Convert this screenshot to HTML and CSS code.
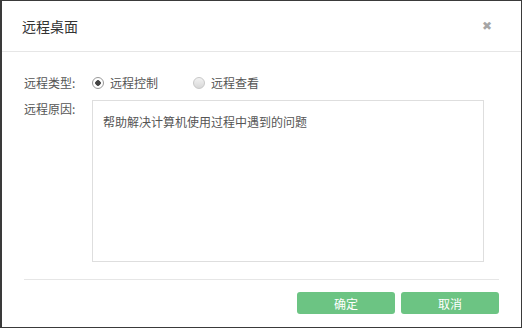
FILE: index.html
```html
<!DOCTYPE html>
<html lang="zh-CN">
<head>
    <meta charset="UTF-8">
    <title>远程桌面</title>
    <link rel="stylesheet" href="styles.css">
</head>
<body>
    <div class="dialog">
        <div class="dialog-header">
            <span class="dialog-title">远程桌面</span>
            <span class="close">&#x2716;</span>
        </div>

        <div class="dialog-body">
            <div class="form-row">
                <label class="form-label">远程类型:</label>
                <div class="radio-group">
                    <span class="radio checked"></span><span class="radio-text">远程控制</span>
                    <span class="radio"></span><span class="radio-text">远程查看</span>
                </div>
            </div>
            <div class="form-row reason-row">
                <label class="form-label">远程原因:</label>
                <div class="reason-box">帮助解决计算机使用过程中遇到的问题</div>
            </div>
        </div>

        <div class="dialog-footer">
            <button class="btn">确定</button>
            <button class="btn">取消</button>
        </div>
    </div>
</body>
</html>
```

FILE: styles.css
```css
body, html {
    margin: 0;
    background-color: #fff;
    font-family: "Noto Sans CJK SC", "Microsoft YaHei", sans-serif;
}
.dialog {
    box-sizing: border-box;
    width: 522px;
    height: 328px;
    border: 1px solid #3a3a3a;
    border-left-width: 2px;
    background-color: #fff;
}
.dialog-header {
    height: 50px;
    border-bottom: 1px solid #e6e6e6;
    display: flex;
    align-items: center;
    justify-content: space-between;
    padding: 0 29px 0 20px;
}
.dialog-title {
    font-size: 14px;
    color: #333;
}
.close {
    font-size: 12px;
    color: #a6a6a6;
    font-family: "DejaVu Sans", sans-serif;
}
.dialog-body {
    padding: 22px 0 0 22px;
    height: 205px;
}
.form-row {
    display: flex;
    align-items: center;
    font-size: 12px;
    color: #555;
}
.form-label {
    width: 68px;
}
.radio-group {
    display: flex;
    align-items: center;
}
.radio {
    box-sizing: border-box;
    width: 12px;
    height: 12px;
    border-radius: 50%;
    border: 1px solid #c8c8c8;
    background: linear-gradient(#f2f2f2, #d8d8d8);
    margin-right: 6px;
}
.radio.checked {
    background: radial-gradient(circle, #444 0 2.5px, #fff 3px);
    border-color: #999;
}
.radio-text {
    margin-right: 35px;
}
.reason-row {
    margin-top: 9px;
    align-items: flex-start;
}
.reason-box {
    box-sizing: border-box;
    width: 392px;
    height: 162px;
    border: 1px solid #dedede;
    padding: 12px 10px;
    color: #555;
}
.dialog-footer {
    margin: 0 22px;
    border-top: 1px solid #e6e6e6;
    padding-top: 12px;
    display: flex;
    justify-content: flex-end;
    gap: 6px;
}
.btn {
    width: 98px;
    height: 22px;
    border: none;
    border-radius: 3px;
    background-color: #6cc483;
    color: #fff;
    font-size: 12px;
    font-family: inherit;
    padding: 0;
    cursor: pointer;
}
```
